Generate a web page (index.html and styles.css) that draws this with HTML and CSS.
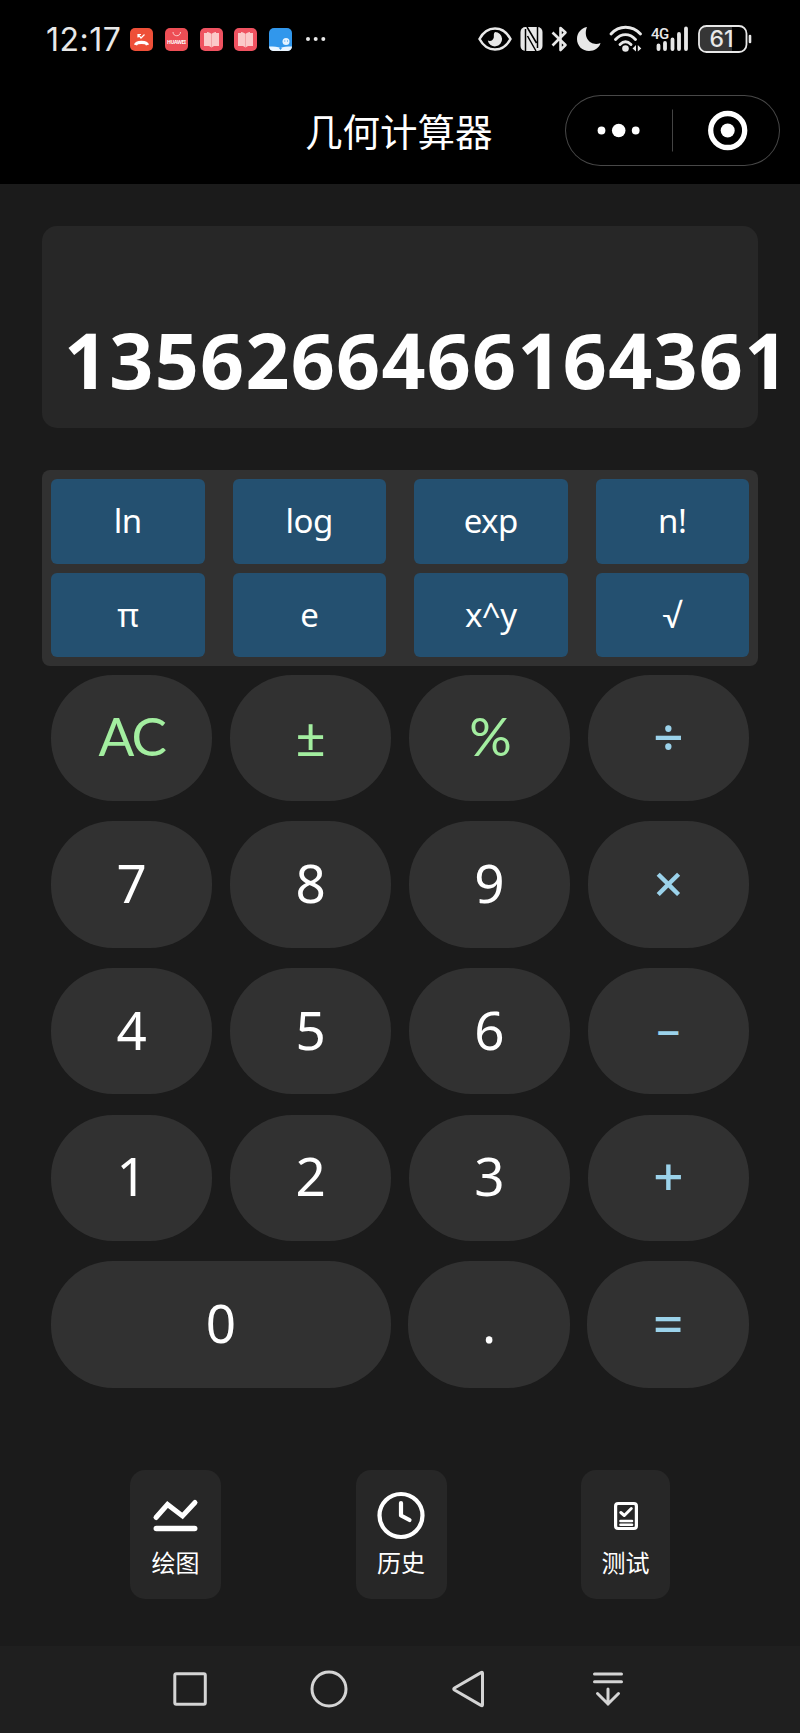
FILE: index.html
```html
<!DOCTYPE html>
<html lang="zh-CN">
  <head>
    <meta charset="UTF-8" />
    <meta name="viewport" content="width=device-width, initial-scale=1.0" />
    <title>几何计算器</title>
    <link rel="stylesheet" href="styles.css">
  </head>
  <body>
    <!-- Status bar -->
    <div class="status-bar">
      <span class="time">12:17</span>
      <div class="notifications">
        <svg width="23" height="23" viewBox="0 0 23 23">
          <rect width="23" height="23" rx="5" fill="#ee4f38" />
          <path d="M5.500 17c1-3.500 11-3.500 12 0" fill="none" stroke="#fff" stroke-width="3.200" />
          <path d="M8 9.500V6.500H11M8.500 7l2.500 3L14.500 6.500" fill="none" stroke="#fff" stroke-width="1.200" />
        </svg>
        <svg width="23" height="23" viewBox="0 0 23 23">
          <rect width="23" height="23" rx="5" fill="#ed4e55" />
          <path d="M8 4c0 5 7.500 5 7.500 0" fill="none" stroke="#fbd0d0" stroke-width="1" />
          <text class="huawei" x="11.500" y="15.500" textLength="19">HUAWEI</text>
        </svg>
        <svg width="23" height="23" viewBox="0 0 23 23">
          <rect width="23" height="23" rx="5" fill="#ef5260" />
          <path d="M4 5h3v-1c2 0 3.500 1 4.500 2 1-1 2.500-2 4.500-2v1h3v13h-5l-2.500 1.500L9 18H4z" fill="#fbc9c9" />
          <path d="M11.500 6v13" stroke="#f3a3a6" />
        </svg>
        <svg width="23" height="23" viewBox="0 0 23 23">
          <rect width="23" height="23" rx="5" fill="#ef5260" />
          <path d="M4 5h3v-1c2 0 3.500 1 4.500 2 1-1 2.500-2 4.500-2v1h3v13h-5l-2.500 1.500L9 18H4z" fill="#fbc9c9" />
          <path d="M11.500 6v13" stroke="#f3a3a6" />
        </svg>
        <svg width="23" height="23" viewBox="0 0 23 23">
          <rect width="23" height="23" rx="5" fill="#3197ec" />
          <path d="M0 18.500c5 0 9 0 11.500 1.500 2.500-1.500 6.500-1.500 11.500-1.500a4.500 4.500 0 0 1-4.500 4.500h-14A4.500 4.500 0 0 1 0 18.500z" fill="#eaf5ff" />
          <path d="M10 20l1.500 2 1.500-2z" fill="#3197ec" />
          <circle cx="17" cy="13.500" r="3.500" fill="#e4f2ff" />
          <path d="M15.300 13h1M18 13h1" stroke="#3197ec" />
        </svg>
        <svg class="more" width="20" height="23" viewBox="0 0 20 23">
          <g fill="#e8e8e8">
            <circle cx="2" cy="11" r="2" />
            <circle cx="9.700" cy="11" r="2" />
            <circle cx="17.300" cy="11" r="2" />
          </g>
        </svg>
      </div>

      <div class="system-icons">
        <svg class="eye" width="34" height="26" viewBox="0 0 34 26">
          <path d="M1.500 13C9-1 25-1 32.500 13 25 27 9 27 1.500 13z" fill="none" stroke="#e8e8e8" stroke-width="2.500" />
          <path d="M17 6a7.200 7.200 0 1 1-7.200 8.500c3 1.300 5.500-.5 6-3 .4-2-.6-4 1.200-5.500z" fill="#e8e8e8" />
        </svg>
        <svg class="nfc" width="23" height="26" viewBox="0 0 23 26">
          <rect x=".5" y="1" width="22" height="24" rx="5" fill="#e8e8e8" />
          <path d="M5.500 3v22M7 1l9.500 16M17.500 1v21M7.500 10L16 25" fill="none" stroke="#000" stroke-width="1.500" />
        </svg>
        <svg class="bluetooth" width="17" height="26" viewBox="0 0 17 26">
          <path d="M1.500 6.500l13 12.500-5 5V2l5 4.500L1.500 19.500" fill="none" stroke="#e8e8e8" stroke-width="2.600" stroke-linejoin="round" />
        </svg>
        <svg class="moon" width="24" height="26" viewBox="0 0 24 26">
          <path d="M10 1C4 2 0 7 0 13c0 7 5.500 12 12 12 5.500 0 10.500-3.500 11.500-8-9 4-18-5-13.500-16z" fill="#e8e8e8" />
        </svg>
        <svg class="wifi" width="34" height="26" viewBox="0 0 34 26">
          <g fill="none" stroke="#e8e8e8" stroke-width="2.900" stroke-linecap="round">
            <path d="M2 8C10-1 23-1 31.500 8" />
            <path d="M6.500 13.500c6-6.500 14-6.500 20 0" />
            <path d="M11 18.500c3.500-3.500 7.500-3.500 11 0" />
          </g>
          <circle cx="16.500" cy="22.500" r="3.300" fill="#e8e8e8" />
          <path d="M27 19v6.500l-3.500-3zM28.800 19v6.500l3.500-3z" fill="#e8e8e8" />
        </svg>
        <svg class="signal" width="38" height="26" viewBox="0 0 38 26">
          <text class="network" x="0" y="12.500">4G</text>
          <path d="M7.500 19.500v3.500M14 17v6M21.500 13.500v9.500M28 8v15M35 2.500v20.500" stroke="#e8e8e8" stroke-width="3.800" stroke-linecap="round" />
        </svg>
        <svg class="battery" width="54" height="28" viewBox="0 0 54 28">
          <path d="M8 2h26v24H8a6 6 0 0 1-6-6V8a6 6 0 0 1 6-6z" fill="#363636" />
          <rect x="1" y="1" width="47.500" height="26" rx="7.500" fill="none" stroke="#e8e8e8" stroke-width="1.800" />
          <path d="M52 11v6" stroke="#e8e8e8" stroke-width="2.600" stroke-linecap="round" />
          <text class="level" x="23.500" y="22">61</text>
        </svg>
      </div>
    </div>

    <header class="title-bar">
      <h1>几何计算器</h1>
      <div class="capsule">
        <svg width="214" height="71" viewBox="0 0 214 71">
          <g fill="#fff">
            <circle cx="36.500" cy="35.500" r="3.900" />
            <circle cx="53.700" cy="35.500" r="6.800" />
            <circle cx="70.700" cy="35.500" r="3.900" />
            <circle cx="162.700" cy="35.500" r="7" />
          </g>
          <path d="M107.500 14.500v42" stroke="#444" />
          <circle cx="162.700" cy="35.500" r="17" fill="none" stroke="#fff" stroke-width="5.300" />
        </svg>
      </div>
    </header>

    <main>
      <div class="display">
        <div class="result">1356266466164361</div>
      </div>

      <div class="functions">
        <button>ln</button>
        <button>log</button>
        <button>exp</button>
        <button>n!</button>
        <button>π</button>
        <button>e</button>
        <button>x^y</button>
        <button class="root">√</button>
      </div>

      <div class="keypad">
        <div class="row">
          <button class="key action letters">AC</button>
          <button class="key action">±</button>
          <button class="key action letters">%</button>
          <button class="key operator">÷</button>
        </div>
        <div class="row">
          <button class="key">7</button>
          <button class="key">8</button>
          <button class="key">9</button>
          <button class="key operator">×</button>
        </div>
        <div class="row">
          <button class="key">4</button>
          <button class="key">5</button>
          <button class="key">6</button>
          <button class="key operator minus">−</button>
        </div>
        <div class="row">
          <button class="key">1</button>
          <button class="key">2</button>
          <button class="key">3</button>
          <button class="key operator">+</button>
        </div>
        <div class="row">
          <button class="key zero">0</button>
          <button class="key">.</button>
          <button class="key operator">=</button>
        </div>
      </div>

      <div class="tools">
        <button class="tool">
          <svg width="48" height="48" viewBox="0 0 48 48">
            <path d="M4 25.500L15.500 12.500l15 11.500L43 10.500" fill="none" stroke="#fff" stroke-width="5" stroke-linecap="round" />
            <path d="M4.300 36.500h38.400" stroke="#fff" stroke-width="5.500" stroke-linecap="round" />
          </svg>
          <span>绘图</span>
        </button>
        <button class="tool">
          <svg width="48" height="48" viewBox="0 0 48 48">
            <circle cx="24" cy="23.500" r="21.500" fill="none" stroke="#fff" stroke-width="4.200" />
            <path d="M24 11v12.500l8.500 4.500" fill="none" stroke="#fff" stroke-width="4.200" stroke-linecap="round" stroke-linejoin="round" />
          </svg>
          <span>历史</span>
        </button>
        <button class="tool small">
          <svg width="48" height="48" viewBox="0 0 48 48">
            <rect x="13.600" y="11.500" width="20.800" height="25" rx="2.500" fill="none" stroke="#fff" stroke-width="3.200" />
            <path d="M18.800 20.500l3.500 3 7-7" fill="none" stroke="#fff" stroke-width="3" stroke-linecap="round" stroke-linejoin="round" />
            <path d="M18.500 29h11.500M18.500 32.800h11.500" stroke="#fff" stroke-width="2.600" stroke-linecap="round" />
          </svg>
          <span>测试</span>
        </button>
      </div>
    </main>

    <!-- Android navigation -->
    <nav class="nav-bar">
      <svg width="40" height="40" viewBox="0 0 40 40">
        <rect x="4.800" y="4.800" width="30.500" height="30.500" rx="1.500" />
      </svg>
      <svg width="40" height="40" viewBox="0 0 40 40">
        <circle cx="20" cy="20" r="17" />
      </svg>
      <svg width="40" height="40" viewBox="0 0 40 40">
        <path d="M33.500 4.300v31.400q0 1.500-1.500.7L5.500 21q-1.500-1 0-2L32 3.600q1.500-.8 1.500.7z" />
      </svg>
      <svg width="40" height="40" viewBox="0 0 40 40">
        <path d="M6.500 5h27M6.500 12.800h27M20 20v15M9.500 24.500L20 35l10.500-10.500" stroke-linecap="round" />
      </svg>
    </nav>
  </body>
</html>
```
FILE: styles.css
```css
* {
  margin: 0;
  padding: 0;
  box-sizing: border-box;
}

body {
  height: 1733px;
  display: flex;
  flex-direction: column;
  background-color: #1b1b1b;
  color: #fff;
  font-family: "Noto Sans", "Noto Sans CJK SC", sans-serif;
  overflow: hidden;
}

svg {
  display: block;
  flex-shrink: 0;
  overflow: visible;
}

button {
  border: none;
  color: inherit;
  font-family: inherit;
}

.status-bar {
  height: 80px;
  padding: 0 48px 2px 46px;
  display: flex;
  align-items: center;
  background-color: #000;
}

.time {
  width: 84px;
  font-family: Inter, sans-serif;
  font-size: 32px;
  color: #e8e8e8;
  letter-spacing: 0.5px;
}

.notifications {
  display: flex;
  gap: 11.8px;
}

.more {
  margin-left: 2px;
}

.huawei {
  font-size: 5px;
  font-weight: bold;
  fill: #fff;
  text-anchor: middle;
}

.system-icons {
  display: flex;
  align-items: center;
  margin-left: auto;
}

.nfc,
.bluetooth,
.wifi,
.signal {
  margin-left: 8px;
}

.moon,
.battery {
  margin-left: 9px;
}

.network {
  font-family: Roboto, sans-serif;
  font-size: 15px;
  font-weight: 500;
  letter-spacing: -0.5px;
  fill: #e8e8e8;
}

.level {
  font-family: Inter, sans-serif;
  font-size: 23px;
  font-weight: 500;
  fill: #e8e8e8;
  text-anchor: middle;
}

.title-bar {
  height: 104px;
  padding: 15px 20px 0 0;
  display: grid;
  grid-template-columns: 305px 1fr 215px;
  align-items: start;
  background-color: #000;
}

.title-bar h1 {
  grid-column: 2;
  font-family: "Noto Sans CJK SC", sans-serif;
  font-size: 37.5px;
  font-weight: normal;
  line-height: 69px;
}

.capsule {
  height: 71px;
  border-radius: 36px;
  box-shadow: inset 0 0 0 1px #484848;
}

main {
  flex: 1;
  padding: 42px 42px 0;
}

.display {
  height: 202px;
  padding: 0 22px 20px;
  display: flex;
  align-items: flex-end;
  background-color: #272727;
  border-radius: 15px;
}

.result {
  font-size: 77px;
  font-weight: bold;
  line-height: 96px;
  letter-spacing: 1.3px;
  white-space: nowrap;
}

.functions {
  height: 196px;
  margin-top: 42px;
  padding: 9px;
  display: grid;
  grid-template-columns: repeat(4, 1fr);
  grid-template-rows: repeat(2, 84.500px);
  gap: 9px 28px;
  background-color: #313131;
  border-radius: 8px;
}

.functions button {
  background-color: #245070;
  border-radius: 6px;
  font-size: 33px;
  line-height: 44px;
  letter-spacing: -0.5px;
}

.functions .root {
  font-family: Lato, sans-serif;
}

.keypad {
  padding: 8.600px 9px 0;
  display: flex;
  flex-direction: column;
  gap: 20.200px;
}

.row {
  display: flex;
  gap: 17.600px;
}

.key {
  width: 161.500px;
  height: 126.500px;
  padding-bottom: 4px;
  background-color: #313131;
  border-radius: 62px;
  font-size: 53px;
}

.zero {
  width: 339.800px;
}

.letters {
  font-family: Lato, sans-serif;
  letter-spacing: -2px;
}

.action {
  color: #a3eea0;
}

.operator {
  color: #9bd2ea;
  font-weight: 500;
}

.minus {
  padding-bottom: 0;
  font-size: 42px;
  font-weight: 600;
}

.tools {
  margin-top: 82px;
  padding: 0 88px;
  display: flex;
  justify-content: space-between;
}

.tool {
  width: 91px;
  height: 129px;
  padding-top: 22px;
  display: flex;
  flex-direction: column;
  align-items: center;
  background-color: #272727;
  border-radius: 15px;
  font-size: 24px;
}

.tool.small {
  width: 89px;
}

.tool span {
  line-height: 34px;
  margin-top: 6px;
}

.nav-bar {
  height: 87px;
  padding: 0 172px 2px 170px;
  display: flex;
  align-items: center;
  justify-content: space-between;
  background-color: #1f1f1f;
}

.nav-bar svg {
  fill: none;
  stroke: #d4d4d4;
  stroke-width: 3;
}
```
